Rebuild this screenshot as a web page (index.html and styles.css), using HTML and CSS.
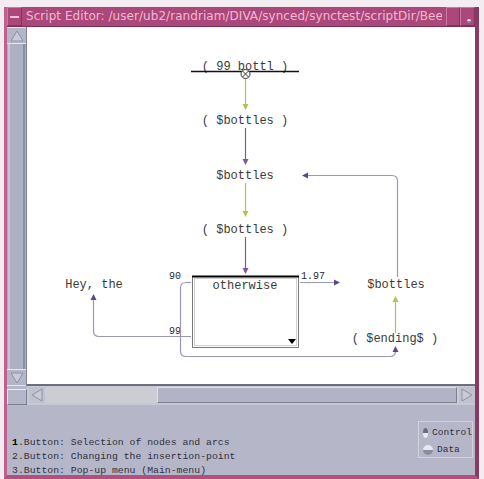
FILE: index.html
```html
<!DOCTYPE html>
<html>
<head>
<meta charset="utf-8">
<link rel="stylesheet" href="styles.css">
</head>
<body>
<div class="window">
  <div class="titlebar">
    <div class="tb-btn tb-menu"><span class="bar"></span></div>
    <div class="title">Script Editor: /user/ub2/randriam/DIVA/synced/synctest/scriptDir/Bee</div>
    <div class="tb-btn tb-min"></div>
    <div class="tb-btn tb-max"><span class="dot"></span></div>
  </div>
  <div class="main">
    <div class="vscroll">
      <div class="arrow-btn up">
        <svg width="16" height="14" viewBox="0 0 16 14"><polygon points="8,2 14,12 2,12" fill="#c9ccd8" stroke="#8e91a6" stroke-width="1"/></svg>
      </div>
      <div class="vtrack"><div class="vthumb"></div></div>
      <div class="arrow-btn down">
        <svg width="16" height="14" viewBox="0 0 16 14"><polygon points="2,2 14,2 8,12" fill="#c9ccd8" stroke="#8e91a6" stroke-width="1"/></svg>
      </div>
    </div>
    <div class="canvas">
      <svg class="diagram" width="448" height="359" viewBox="27 27 448 359">
        <!-- box -->
        <rect x="192.5" y="276.5" width="106" height="71" fill="#fff" stroke="#7a7a7a" stroke-width="1"/>
        <rect x="194.5" y="278.5" width="102" height="67" fill="none" stroke="#d0d0d0" stroke-width="1"/>
        <line x1="192" y1="276.5" x2="299" y2="276.5" stroke="#000" stroke-width="2"/>
        <polygon points="288,339 296,339 292,344" fill="#000"/>
        <g class="lbl">
          <text x="245" y="70" text-anchor="middle">( 99 bottl )</text>
          <text x="245" y="124" text-anchor="middle">( $bottles )</text>
          <text x="245" y="179" text-anchor="middle">$bottles</text>
          <text x="245" y="233" text-anchor="middle">( $bottles )</text>
          <text x="94" y="288" text-anchor="middle">Hey, the</text>
          <text x="396" y="288" text-anchor="middle">$bottles</text>
          <text x="395" y="342" text-anchor="middle">( $ending$ )</text>
          <text x="245" y="289" text-anchor="middle">otherwise</text>
        </g>
        <g class="small">
          <text x="169" y="279">90</text>
          <text x="301" y="279">1.97</text>
          <text x="169" y="334">99</text>
        </g>
        <!-- start node underline and circle -->
        <line x1="191" y1="71.5" x2="299" y2="71.5" stroke="#111" stroke-width="1.5"/>
        <circle cx="245.5" cy="74" r="4.5" fill="#fff" stroke="#333" stroke-width="1"/>
        <path d="M242.5 71 L248.5 77 M248.5 71 L242.5 77" stroke="#333" stroke-width="1"/>
        <!-- green arrows -->
        <g stroke="#a9c45a" stroke-width="1.2" fill="#a9c45a">
          <line x1="245.5" y1="79" x2="245.5" y2="106"/>
          <polygon points="242.5,104 248.5,104 245.5,110" stroke="none"/>
          <line x1="245.5" y1="183" x2="245.5" y2="213"/>
          <polygon points="242.5,211 248.5,211 245.5,217" stroke="none"/>
          <line x1="395.5" y1="333" x2="395.5" y2="300"/>
          <polygon points="392.5,302 398.5,302 395.5,296" stroke="none"/>
        </g>
        <!-- purple arrows -->
        <g stroke="#7b5a9c" stroke-width="1.2" fill="#7b5a9c">
          <line x1="245.5" y1="128" x2="245.5" y2="161"/>
          <polygon points="242.5,159 248.5,159 245.5,165" stroke="none"/>
          <line x1="245.5" y1="237" x2="245.5" y2="270"/>
          <polygon points="242.5,268 248.5,268 245.5,274" stroke="none"/>
        </g>
        <!-- gray-purple connectors -->
        <g stroke="#9b97b8" stroke-width="1.2" fill="none">
          <line x1="300" y1="282.5" x2="336" y2="282.5"/>
          <path d="M191 336.5 L99 336.5 Q93.5 336.5 93.5 331 L93.5 300"/>
          <path d="M191 282.5 L186 282.5 Q180.5 282.5 180.5 288 L180.5 351 Q180.5 356.5 186 356.5 L390 356.5 Q395.5 356.5 395.5 351 L395.5 353"/>
          <path d="M397.5 277 L397.5 181 Q397.5 175.5 392 175.5 L307 175.5"/>
        </g>
        <g fill="#5a4a8a">
          <polygon points="334,279.5 334,285.5 340,282.5"/>
          <polygon points="90.5,300 96.5,300 93.5,294"/>
          <polygon points="392.5,352 398.5,352 395.5,346"/>
          <polygon points="308,172.5 308,178.5 302,175.5"/>
        </g>
      </svg>
    </div>
    <div class="corner"></div>
    <div class="hscroll">
      <div class="arrow-btn left">
        <svg width="14" height="16" viewBox="0 0 14 16"><polygon points="2,8 12,2 12,14" fill="#c9ccd8" stroke="#8e91a6" stroke-width="1"/></svg>
      </div>
      <div class="htrack"><div class="hthumb"></div></div>
      <div class="arrow-btn right">
        <svg width="14" height="16" viewBox="0 0 14 16"><polygon points="12,8 2,2 2,14" fill="#c9ccd8" stroke="#8e91a6" stroke-width="1"/></svg>
      </div>
    </div>
  </div>
  <div class="panel">
    <div class="help">
      <div><b>1</b>.Button: Selection of nodes and arcs</div>
      <div>2.Button: Changing the insertion-point</div>
      <div>3.Button: Pop-up menu (Main-menu)</div>
    </div>
    <div class="radios">
      <div class="radio"><span class="dot on"></span>Control</div>
      <div class="radio"><span class="dot"></span>Data</div>
    </div>
  </div>
</div>
</body>
</html>
```
FILE: styles.css
```css
html, body {
  margin: 0;
  padding: 0;
}
body {
  background: #f3ecf0;
  width: 484px;
  height: 479px;
  overflow: hidden;
}
.window {
  margin: 7px 0 0 4px;
  width: 468px;
  height: 468px;
  border-style: solid;
  border-width: 0 4px 4px 3px;
  border-color: #b0507f #8a3a62 #b0507f #c0608f;
  display: flex;
  flex-direction: column;
  background: #b5b7c8;
}
.titlebar {
  height: 20px;
  background: #ac4779;
  display: flex;
  align-items: stretch;
  border-bottom: 1px solid #7e2f57;
  box-sizing: border-box;
}
.tb-btn {
  width: 15px;
  border: 1px solid #c87aa2;
  border-right-color: #85355d;
  border-bottom-color: #85355d;
  box-sizing: border-box;
  display: flex;
  align-items: center;
  justify-content: center;
  position: relative;
}
.tb-menu .bar {
  width: 9px;
  height: 2px;
  background: #f0c0d8;
}
.tb-max .dot {
  width: 4px;
  height: 4px;
  background: #d890b4;
  position: absolute;
  bottom: 2px;
  right: 3px;
}
.title {
  flex: 1;
  color: #eebad4;
  font-family: "DejaVu Sans", sans-serif;
  font-size: 12px;
  line-height: 19px;
  padding-left: 4px;
  white-space: nowrap;
  overflow: hidden;
  letter-spacing: 0.05px;
}
.tb-min {
  width: 14px;
  margin-left: 4px;
}
.main {
  display: grid;
  grid-template-columns: 20px 448px;
  grid-template-rows: 359px 19px;
}
.vscroll {
  background: #a9adbf;
  display: flex;
  flex-direction: column;
  border-right: 1px solid #7f8296;
  box-sizing: border-box;
}
.arrow-btn {
  display: flex;
  align-items: center;
  justify-content: center;
  background: #b3b6c6;
  box-sizing: border-box;
}
.arrow-btn.up, .arrow-btn.down {
  height: 17px;
  border-bottom: 1px solid #e6e7ee;
  border-top: 1px solid #e6e7ee;
}
.vtrack {
  flex: 1;
  display: flex;
  padding: 0 1px;
}
.vthumb {
  flex: 1;
  background: #aeb1c3;
  border-left: 2px solid #c4c6d3;
  border-right: 2px solid #8c8fa4;
}
.canvas {
  background: #ffffff;
  border-bottom: 2px solid #6e6e7e;
  box-sizing: border-box;
  overflow: hidden;
}
.diagram {
  display: block;
}
.lbl text {
  font-family: "Liberation Mono", monospace;
  font-size: 12px;
  fill: #3a3a3a;
}
.small text {
  font-family: "Liberation Mono", monospace;
  font-size: 10px;
  fill: #2a2a2a;
}
.corner {
  background: #b4b7c7;
  border: 1px solid #eceef3;
  border-right-color: #7c7f94;
  border-bottom-color: #7c7f94;
  box-sizing: border-box;
  margin-top: 3px;
}
.hscroll {
  display: flex;
  align-items: stretch;
  background: #c6c8d2;
  padding: 1px 0 2px 2px;
  box-sizing: border-box;
}
.arrow-btn.left, .arrow-btn.right {
  width: 16px;
  background: #c0c2ce;
}
.htrack {
  flex: 1;
  display: flex;
  background: #cbccd4;
  padding-left: 112px;
  padding-right: 2px;
}
.hthumb {
  flex: 1;
  background: #b2b4c6;
  border: 1px solid #e2e3ea;
  border-right-color: #7d8095;
  border-bottom-color: #7d8095;
}
.panel {
  flex: 1;
  display: flex;
  justify-content: space-between;
  align-items: flex-start;
  background: #b5b7c8;
}
.help {
  align-self: flex-end;
  margin-bottom: -3px;
  padding: 0 0 0 5px;
  font-family: "Liberation Mono", monospace;
  font-size: 9.8px;
  line-height: 14px;
  color: #2f3040;
}
.help b {
  color: #000;
}
.radios {
  margin-top: 16px;
  margin-right: 2px;
  width: 55px;
  height: 37px;
  box-sizing: border-box;
  border: 1px solid #d0d2dc;
  padding: 5px 0 0 4px;
  display: flex;
  flex-direction: column;
  gap: 6px;
}
.radio {
  display: flex;
  align-items: center;
  gap: 4px;
  font-family: "Liberation Mono", monospace;
  font-size: 9.5px;
  color: #2f3040;
  height: 11px;
}
.dot {
  width: 10px;
  height: 10px;
  border-radius: 50%;
  background: linear-gradient(#6a6c80 50%, #e8e9ef 50%);
}
.dot:not(.on) {
  background: linear-gradient(#e8e9ef 50%, #8a8c9e 50%);
}
```
